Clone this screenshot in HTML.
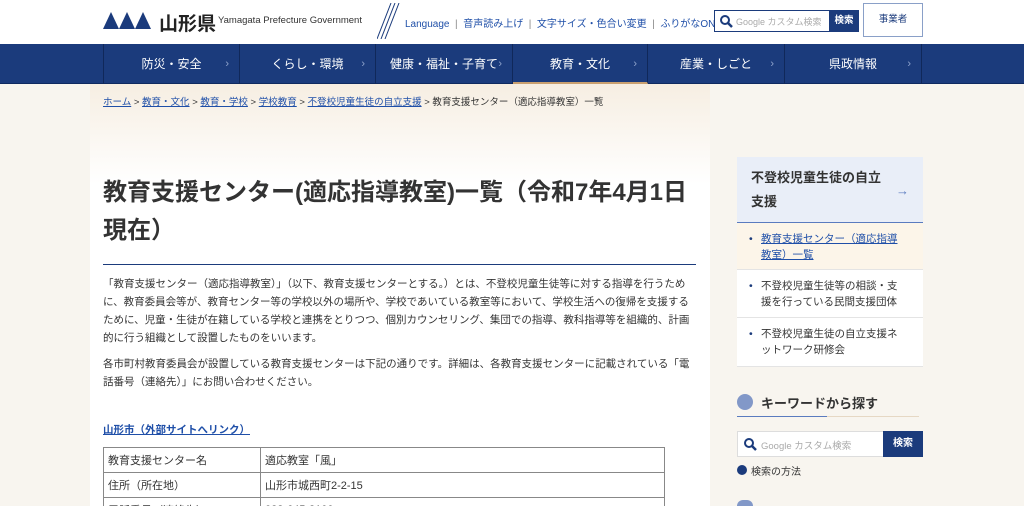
<!DOCTYPE html>
<html style="width:1024px;height:506px;overflow:hidden"><head><meta charset="utf-8"><style>
*{margin:0;padding:0;box-sizing:border-box}
body{width:1024px;height:506px;overflow:hidden;background:#f8f5ef;font-family:"Liberation Sans","Noto Sans CJK JP",sans-serif;color:#333;position:relative}
.a{position:absolute;white-space:nowrap}
header{position:absolute;left:0;top:0;width:1024px;height:44px;background:#fff}
nav{position:absolute;left:0;top:44px;width:1024px;height:40px;background:#1b3b7c;border-bottom:1px solid #0f2a60}
nav div{position:absolute;top:0;height:40px;color:#fff;font-size:12px;line-height:40px;text-align:center;border-right:1px solid #10285a}
nav div span{position:absolute;right:10px;top:0;color:#8fa3cc;font-size:11px}
.lk{color:#1f4fa8;text-decoration:underline}
p{font-size:10.5px;line-height:18px;color:#333}
table{border-collapse:collapse;position:absolute;left:103px;top:447px;width:562px;background:#fff}
td{border:1px solid #888;height:25px;font-size:11px;padding:0 4px}
.sb div.it{position:absolute;left:737px;width:186px;background:#fff;border-bottom:1px solid #e4e4e4;font-size:10.5px;line-height:16px;padding:8px 10px 0 24px}
.sb div.it:before{content:"•";position:absolute;left:12px;color:#1b3b7c}
</style></head><body>
<div class="a" style="left:90px;top:84px;width:620px;height:422px;background:#fff"></div>
<div class="a" style="left:90px;top:84px;width:620px;height:100px;background:linear-gradient(#f6eee2,#fff)"></div>
<header>
<svg class="a" style="left:103px;top:12px" width="48" height="17"><polygon points="0,17 8,0 16,17" fill="#1b3b7c"/><polygon points="16,17 24,0 32,17" fill="#1b3b7c"/><polygon points="32,17 40,0 48,17" fill="#1b3b7c"/></svg>
<div class="a" style="left:159px;top:9px;font-size:19px;font-weight:bold;color:#222">山形県</div>
<div class="a" style="left:218px;top:15px;font-size:9.5px;color:#333">Yamagata Prefecture Government</div>
<svg class="a" style="left:377px;top:3px" width="24" height="36"><g stroke="#1b3b7c" stroke-width="1"><line x1="0" y1="36" x2="14" y2="0"/><line x1="4" y1="36" x2="18" y2="0"/><line x1="8" y1="36" x2="22" y2="0"/></g></svg>
<div class="a" style="left:405px;top:15px;font-size:10px;color:#1f4fa8">Language <span style="color:#888">&nbsp;|&nbsp;</span> 音声読み上げ <span style="color:#888">&nbsp;|&nbsp;</span> 文字サイズ・色合い変更 <span style="color:#888">&nbsp;|&nbsp;</span> ふりがなON</div>
<div class="a" style="left:714px;top:10px;width:145px;height:22px;border:1px solid #1b3b7c;background:#fff"></div>
<svg class="a" style="left:719px;top:14px" width="14" height="14"><circle cx="6" cy="6" r="4" fill="none" stroke="#1b3b7c" stroke-width="2"/><line x1="9" y1="9" x2="13" y2="13" stroke="#1b3b7c" stroke-width="2.5"/></svg>
<div class="a" style="left:736px;top:15px;font-size:9px;color:#aaa">Google カスタム検索</div>
<div class="a" style="left:829px;top:10px;width:30px;height:22px;background:#1b3b7c;color:#fff;font-size:9.5px;line-height:22px;text-align:center;font-weight:bold">検索</div>
<div class="a" style="left:863px;top:3px;width:60px;height:34px;border:1px solid #8aa0c8;background:#fff;color:#1b3b7c;font-size:9.5px;line-height:32px;text-align:center">事業者</div>
</header>
<nav>
<div style="left:103px;width:137px;border-left:1px solid #10285a">防災・安全<span>›</span></div>
<div style="left:240px;width:136px">くらし・環境<span>›</span></div>
<div style="left:376px;width:137px">健康・福祉・子育て<span>›</span></div>
<div style="left:513px;width:135px;border-bottom:2px solid #c9a070">教育・文化<span>›</span></div>
<div style="left:648px;width:137px">産業・しごと<span>›</span></div>
<div style="left:785px;width:137px">県政情報<span>›</span></div>
</nav>
<div class="a" style="left:103px;top:94px;font-size:9.5px;color:#333"><span class="lk">ホーム</span> &gt; <span class="lk">教育・文化</span> &gt; <span class="lk">教育・学校</span> &gt; <span class="lk">学校教育</span> &gt; <span class="lk">不登校児童生徒の自立支援</span> &gt; 教育支援センター（適応指導教室）一覧</div>
<div class="a" style="left:103px;top:174px;font-size:24px;line-height:38px;font-weight:bold;color:#333;white-space:normal;width:610px">教育支援センター(適応指導教室)一覧（令和7年4月1日<br>現在）</div>
<div class="a" style="left:103px;top:264px;width:593px;height:1px;background:#1b3b7c"></div>
<div class="a" style="left:103px;top:275px;width:595px;white-space:normal">
<p>「教育支援センター（適応指導教室）」（以下、教育支援センターとする。）とは、不登校児童生徒等に対する指導を行うために、教育委員会等が、教育センター等の学校以外の場所や、学校であいている教室等において、学校生活への復帰を支援するために、児童・生徒が在籍している学校と連携をとりつつ、個別カウンセリング、集団での指導、教科指導等を組織的、計画的に行う組織として設置したものをいいます。</p>
<p style="margin-top:8px">各市町村教育委員会が設置している教育支援センターは下記の通りです。詳細は、各教育支援センターに記載されている「電話番号（連絡先）」にお問い合わせください。</p></div>
<div class="a lk" style="left:103px;top:422px;font-size:10.5px;font-weight:bold">山形市（外部サイトへリンク）</div>
<table><tr><td style="width:157px">教育支援センター名</td><td>適応教室「風」</td></tr><tr><td>住所（所在地）</td><td>山形市城西町2-2-15</td></tr><tr><td>電話番号（連絡先）</td><td>023-645-3100</td></tr></table>
<div class="sb">
<div class="a" style="left:737px;top:157px;width:186px;height:66px;background:#e9eef8;border-bottom:1px solid #5a7bbf;font-size:13px;font-weight:bold;line-height:24px;padding:9px 14px;white-space:normal">不登校児童生徒の自立<br>支援<span style="position:absolute;right:14px;top:22px;color:#5a7bbf;font-weight:normal">→</span></div>
<div class="it" style="top:223px;height:47px;background:#fcf5e9;color:#1f4fa8;text-decoration:underline">教育支援センター（適応指導<br>教室）一覧</div>
<div class="it" style="top:270px;height:48px">不登校児童生徒等の相談・支<br>援を行っている民間支援団体</div>
<div class="it" style="top:318px;height:49px">不登校児童生徒の自立支援ネ<br>ットワーク研修会</div>
</div>
<div class="a" style="left:737px;top:394px;width:16px;height:16px;border-radius:50%;background:#8298c8"></div>
<div class="a" style="left:761px;top:393px;font-size:13px;font-weight:bold;color:#333">キーワードから探す</div>
<div class="a" style="left:737px;top:416px;width:90px;height:1px;background:#5a7bbf"></div>
<div class="a" style="left:827px;top:416px;width:92px;height:1px;background:#e6d8c4"></div>
<div class="a" style="left:737px;top:431px;width:147px;height:26px;background:#fff;border:1px solid #ddd"></div>
<svg class="a" style="left:743px;top:437px" width="14" height="14"><circle cx="6" cy="6" r="4" fill="none" stroke="#1b3b7c" stroke-width="2"/><line x1="9" y1="9" x2="13" y2="13" stroke="#1b3b7c" stroke-width="2.5"/></svg>
<div class="a" style="left:761px;top:438px;font-size:9.5px;color:#aaa">Google カスタム検索</div>
<div class="a" style="left:883px;top:431px;width:40px;height:26px;background:#1b3b7c;color:#fff;font-size:10px;font-weight:bold;line-height:26px;text-align:center">検索</div>
<div class="a" style="left:737px;top:465px;width:10px;height:10px;border-radius:50%;background:#1b3b7c"></div>
<div class="a" style="left:751px;top:463px;font-size:10px;color:#333">検索の方法</div>
<div class="a" style="left:737px;top:500px;width:16px;height:6px;border-radius:8px 8px 0 0;background:#8298c8"></div>
</body></html>
